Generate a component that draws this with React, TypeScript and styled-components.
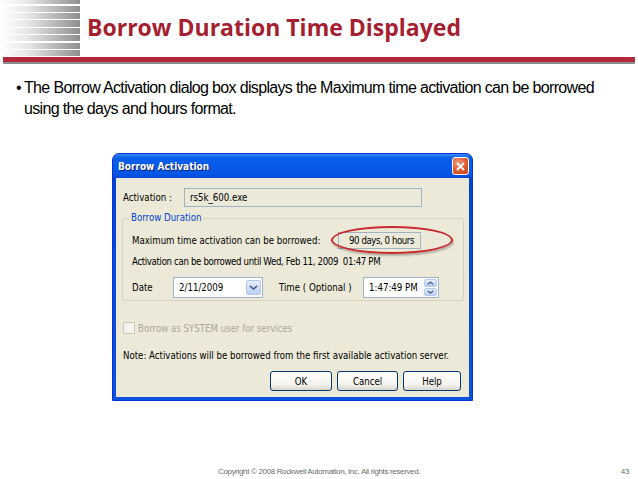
import React from "react"
import styled, { createGlobalStyle } from "styled-components"

const GlobalStyle = createGlobalStyle`
  html, body {
    margin: 0;
    padding: 0;
    background: #fff;
  }
  body {
    width: 638px;
    height: 479px;
    overflow: hidden;
  }
`;

const UI_FONT = `"DejaVu Sans Condensed", "DejaVu Sans", sans-serif`;
const NARROW = `"Liberation Sans Narrow", "Liberation Sans", Arial, sans-serif`;

const Slide = styled.div`
    width: 638px;
    height: 479px;
    display: flex;
    flex-direction: column;
    background: #fff;
    font-family: "Liberation Sans", Arial, sans-serif;
`;

const Header = styled.header`
    display: flex;
    align-items: center;
    height: 56px;
`;

const Stripes = styled.div`
    flex: none;
    width: 80px;
    height: 56px;
    background:
        repeating-linear-gradient(to bottom, transparent 0, transparent 4.4px, #fff 4.4px, #fff 5.6px, transparent 5.6px, transparent 7.4px),
        linear-gradient(to right, #fff 0%, #e6e6e6 35%, #b0b0b0 75%, #8e8e8e 100%);
`;

const Title = styled.h1`
    margin: 0 0 3px 7px;
    font-family: "Open Sans", sans-serif;
    font-weight: 700;
    font-size: 23px;
    color: #a61f30;
`;

const Rule = styled.div`
    margin: 1px 3px 0 3px;
    height: 5px;
    background: #b3283a;
    box-shadow: 0 2px 0 #8c8c8c;
`;

const BulletText = styled.div`
    display: flex;
    margin: 15px 30px 0 16px;
    font-family: ${NARROW};
    font-size: 16px;
    letter-spacing: -0.66px;
    line-height: 21px;
    color: #000;

    > span:first-child {
        flex: none;
        width: 8px;
    }
`;

const Window = styled.div`
    box-sizing: border-box;
    width: 361px;
    height: 248px;
    margin: 34px 0 0 112px;
    display: flex;
    flex-direction: column;
    padding: 0 3px 3px;
    border-radius: 7px 7px 0 0;
    background: linear-gradient(to bottom, #3a8cf6 0px, #0a5fe9 4px, #0556e4 20px, #0344d1 25px, #0a52dc 100%);
    border: 1px solid #0831d9;
    font-family: ${UI_FONT};
    font-size: 9.6px;
    color: #000;
`;

const TitleBar = styled.div`
    display: flex;
    align-items: center;
    justify-content: space-between;
    height: 24px;
    padding: 0 0 0 2px;
    color: #fff;
    font-weight: bold;
    font-size: 10px;
    text-shadow: 1px 1px 0 #0a1f7a;
`;

const CloseButton = styled.div`
    width: 17px;
    height: 18px;
    box-sizing: border-box;
    border: 1px solid #fff;
    border-radius: 3px;
    background: radial-gradient(circle at 35% 30%, #f09a7c 0%, #e05a30 55%, #c3401c 100%);
    display: flex;
    align-items: center;
    justify-content: center;
`;

const Body = styled.div`
    flex: 1;
    display: flex;
    flex-direction: column;
    background: #ece9d8;
    padding: 10px 8px 0 7px;
`;

const Row = styled.div<{ $top?: number }>`
    display: flex;
    align-items: center;
    margin-top: ${(p) => p.$top ?? 0}px;
`;

const Label = styled.span<{ $w?: number; $muted?: boolean; $tight?: boolean }>`
    flex: none;
    width: ${(p) => (p.$w ? `${p.$w}px` : "auto")};
    color: ${(p) => (p.$muted ? "#aca899" : "#000")};
    letter-spacing: ${(p) => (p.$tight ? "-0.35px" : "normal")};
    white-space: nowrap;
`;

const Field = styled.div<{ $w: number; $h?: number; $white?: boolean; $center?: boolean }>`
    box-sizing: border-box;
    width: ${(p) => p.$w}px;
    height: ${(p) => p.$h ?? 19}px;
    display: flex;
    align-items: center;
    justify-content: ${(p) => (p.$center ? "center" : "space-between")};
    padding: 0 1px 0 5px;
    border: 1px solid #9fb3c8;
    background: ${(p) => (p.$white ? "#fff" : "#ece9d8")};
    letter-spacing: ${(p) => (p.$center ? "-0.45px" : "normal")};
    white-space: nowrap;
`;

const Group = styled.fieldset`
    box-sizing: border-box;
    width: 342px;
    margin: 5px 0 0 -1px;
    padding: 0 0 2px 9px;
    border: 1px solid #d5d2c3;
    border-radius: 3px;

    > legend {
        color: #0046d5;
        padding: 0 2px;
        margin-left: -3px;
        line-height: 12px;
    }
`;

const ValueWrap = styled.div`
    position: relative;
`;

const Ellipse = styled.div`
    position: absolute;
    left: -7px;
    top: -6px;
    width: 122px;
    height: 28px;
    box-sizing: border-box;
    border: 2px solid #c92a30;
    border-radius: 50%;
    box-shadow: 1px 2px 2px rgba(0, 0, 0, 0.25);
    pointer-events: none;
`;

const DropButton = styled.div`
    width: 15px;
    height: 15px;
    border-radius: 2px;
    background: linear-gradient(to bottom, #e6eefc, #b9cff7);
    border: 1px solid #b5c8f0;
    display: flex;
    align-items: center;
    justify-content: center;
    box-sizing: border-box;
`;

const Spinner = styled.div`
    display: flex;
    flex-direction: column;
    gap: 1px;
`;

const SpinButton = styled(DropButton)`
    width: 13px;
    height: 8px;
`;

const CheckBox = styled.span`
    box-sizing: border-box;
    width: 12px;
    height: 12px;
    margin-right: 3px;
    border: 1px solid #cac8bb;
    background: #f4f3ee;
`;

const Buttons = styled.div`
    display: flex;
    justify-content: flex-end;
    gap: 5px;
    margin-top: 10px;
`;

const Button = styled.div<{ $w: number }>`
    box-sizing: border-box;
    width: ${(p) => p.$w}px;
    height: 20px;
    display: flex;
    align-items: center;
    justify-content: center;
    border: 1px solid #003c74;
    border-radius: 3px;
    background: linear-gradient(to bottom, #ffffff 0%, #f3f2ed 70%, #d8d6cc 100%);
`;

const Footer = styled.footer`
    display: flex;
    align-items: center;
    margin-top: auto;
    height: 14px;
    padding: 0 9px 1px 218px;
    font-family: ${NARROW};
    font-size: 8px;
    letter-spacing: -0.35px;
    color: #6e6e6e;

    > span:last-child {
        margin-left: auto;
    }
`;

const Chevron: React.FC<{ up?: boolean; size?: number }> = ({ up, size = 9 }) => (
    <svg width={size} height={size * 0.6} viewBox="0 0 10 6">
        <path d={up ? "M1 5 L5 1.5 L9 5" : "M1 1 L5 4.5 L9 1"} fill="none" stroke="#4d6185" strokeWidth="1.8" />
    </svg>
);

const App: React.FC = () => {
    return (
        <Slide>
            <GlobalStyle />
            <Header>
                <Stripes />
                <Title>Borrow Duration Time Displayed</Title>
            </Header>
            <Rule />
            <BulletText>
                <span>•</span>
                <span>The Borrow Activation dialog box displays the Maximum time activation can be borrowed using the days and hours format.</span>
            </BulletText>
            <Window>
                <TitleBar>
                    <span>Borrow Activation</span>
                    <CloseButton>
                        <svg width="9" height="9" viewBox="0 0 9 9">
                            <path d="M1 1 L8 8 M8 1 L1 8" stroke="#fff" strokeWidth="1.8" />
                        </svg>
                    </CloseButton>
                </TitleBar>
                <Body>
                    <Row>
                        <Label $w={61}>Activation :</Label>
                        <Field $w={238}>rs5k_600.exe</Field>
                    </Row>
                    <Group>
                        <legend>Borrow Duration</legend>
                        <Row $top={8}>
                            <Label $w={206}>Maximum time activation can be borrowed:</Label>
                            <ValueWrap>
                                <Field $w={83} $h={17} $center>90 days, 0 hours</Field>
                                <Ellipse />
                            </ValueWrap>
                        </Row>
                        <Row $top={7}>
                            <Label $tight>Activation can be borrowed until Wed, Feb 11, 2009&nbsp; 01:47 PM</Label>
                        </Row>
                        <Row $top={10}>
                            <Label $w={41}>Date</Label>
                            <Field $w={90} $h={21} $white>
                                <span>2/11/2009</span>
                                <DropButton><Chevron /></DropButton>
                            </Field>
                            <Label $w={84} style={{ marginLeft: 16 }}>Time ( Optional )</Label>
                            <Field $w={76} $h={21} $white>
                                <span>1:47:49 PM</span>
                                <Spinner>
                                    <SpinButton><Chevron up size={7} /></SpinButton>
                                    <SpinButton><Chevron size={7} /></SpinButton>
                                </Spinner>
                            </Field>
                        </Row>
                    </Group>
                    <Row $top={21}>
                        <CheckBox />
                        <Label $muted>Borrow as SYSTEM user for services</Label>
                    </Row>
                    <Row $top={16}>
                        <Label>Note: Activations will be borrowed from the first available activation server.</Label>
                    </Row>
                    <Buttons>
                        <Button $w={62}>OK</Button>
                        <Button $w={61}>Cancel</Button>
                        <Button $w={58}>Help</Button>
                    </Buttons>
                </Body>
            </Window>
            <Footer>
                <span>Copyright © 2008 Rockwell Automation, Inc. All rights reserved.</span>
                <span>43</span>
            </Footer>
        </Slide>
    )
}

export default App;
